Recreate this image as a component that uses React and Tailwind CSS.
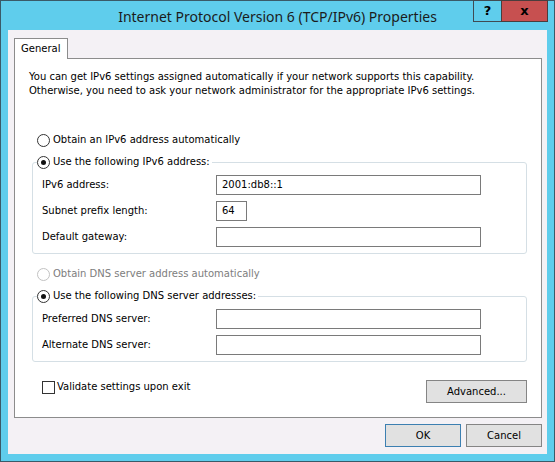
import React from "react";

function Radio({ checked, disabled }) {
  return (
    <span
      className={`inline-flex w-[13px] h-[13px] shrink-0 items-center justify-center rounded-full border bg-white ${
        disabled ? "border-[#c2c2c2]" : "border-[#333333]"
      }`}
    >
      {checked && <span className="w-[5px] h-[5px] rounded-full bg-[#111111]" />}
    </span>
  );
}

function Field({ label, value, small }) {
  return (
    <div className="flex h-[20px] items-center">
      <div className="w-[174px] pl-[9px] box-content">{label}</div>
      <div
        className={`flex h-[20px] items-center border border-[#7a7a7a] bg-white pl-[5px] ${
          small ? "w-[31px]" : "w-[265px]"
        }`}
      >
        {value}
      </div>
    </div>
  );
}

function Btn({ children, primary, w }) {
  return (
    <div
      className={`flex h-[23px] items-center justify-center border bg-[#e1e1e1] ${
        primary ? "border-[#3c7fb1]" : "border-[#858585]"
      } ${w}`}
    >
      {children}
    </div>
  );
}

export default function App() {
  const ui = "font-['DejaVu_Sans',sans-serif] text-[10px] leading-[14px] text-black";
  return (
    <div className="relative flex h-[462px] w-[555px] flex-col border border-[#3a5a68] bg-[#5fcdec]">
      {/* Title bar */}
      <div className="flex h-[29px] items-center justify-center pt-px">
        <span className="font-['Noto_Sans',sans-serif] text-[14px] text-[#1b1b1b]">
          Internet Protocol Version 6 (TCP/IPv6) Properties
        </span>
      </div>
      <div className="absolute right-[6px] top-[-1px] flex">
        <div className="flex h-[22px] w-[29px] items-center justify-center border border-[#404b52] bg-[#5fcdec] font-['DejaVu_Sans',sans-serif] text-[13px] font-bold text-black">
          ?
        </div>
        <div className="-ml-px flex h-[22px] w-[47px] items-center justify-center border border-[#4a3d3d] bg-[#c75050] font-['DejaVu_Sans',sans-serif] text-[13px] font-bold text-black">
          x
        </div>
      </div>

      {/* Dialog body */}
      <div className={`mx-[7px] mb-[7px] flex flex-1 flex-col bg-[#f4f1f5] pl-[6px] pt-[8px] ${ui}`}>
        {/* Tab */}
        <div className="relative z-10 -mb-px flex h-[21px] w-[54px] items-center border border-b-0 border-[#8c8c8c] bg-white pl-[6px]">
          General
        </div>
        {/* Panel */}
        <div className="flex h-[360px] w-[528px] flex-col border border-[#8c8c8c] bg-white">
          <div className="ml-[14px] mt-[11px]">
            <div>You can get IPv6 settings assigned automatically if your network supports this capability.</div>
            <div>Otherwise, you need to ask your network administrator for the appropriate IPv6 settings.</div>
          </div>

          <div className="ml-[22px] mt-[35px] flex items-center gap-[3px]">
            <Radio />
            <span>Obtain an IPv6 address automatically</span>
          </div>

          <fieldset className="ml-[17px] mt-[8px] w-[495px] rounded-[3px] border border-[#d5dfe5] pb-[6px]">
            <legend className="ml-[4px] pr-[2px]">
              <span className="flex items-center gap-[3px]">
                <Radio checked />
                <span>Use the following IPv6 address:</span>
              </span>
            </legend>
            <div className="mt-[6px] flex flex-col gap-[6px]">
              <Field label="IPv6 address:" value="2001:db8::1" />
              <Field label="Subnet prefix length:" value="64" small />
              <Field label="Default gateway:" value="" />
            </div>
          </fieldset>

          <div className="ml-[22px] mt-[13px] flex items-center gap-[3px] text-[#7d7d7d]">
            <Radio disabled />
            <span>Obtain DNS server address automatically</span>
          </div>

          <fieldset className="ml-[17px] mt-[8px] w-[495px] rounded-[3px] border border-[#d5dfe5] pb-[6px]">
            <legend className="ml-[4px] pr-[2px]">
              <span className="flex items-center gap-[3px]">
                <Radio checked />
                <span>Use the following DNS server addresses:</span>
              </span>
            </legend>
            <div className="mt-[6px] flex flex-col gap-[6px]">
              <Field label="Preferred DNS server:" value="" />
              <Field label="Alternate DNS server:" value="" />
            </div>
          </fieldset>

          <div className="ml-[27px] mt-[18px] flex w-[485px] items-start justify-between">
            <div className="flex items-center gap-[2px]">
              <span className="h-[13px] w-[13px] border border-[#333333] bg-white" />
              <span>Validate settings upon exit</span>
            </div>
            <Btn w="w-[101px]">Advanced...</Btn>
          </div>
        </div>

        {/* Bottom buttons */}
        <div className="mt-[6px] flex w-[528px] justify-end gap-[5px]">
          <Btn primary w="w-[76px]">OK</Btn>
          <Btn w="w-[76px]">Cancel</Btn>
        </div>
      </div>
    </div>
  );
}
